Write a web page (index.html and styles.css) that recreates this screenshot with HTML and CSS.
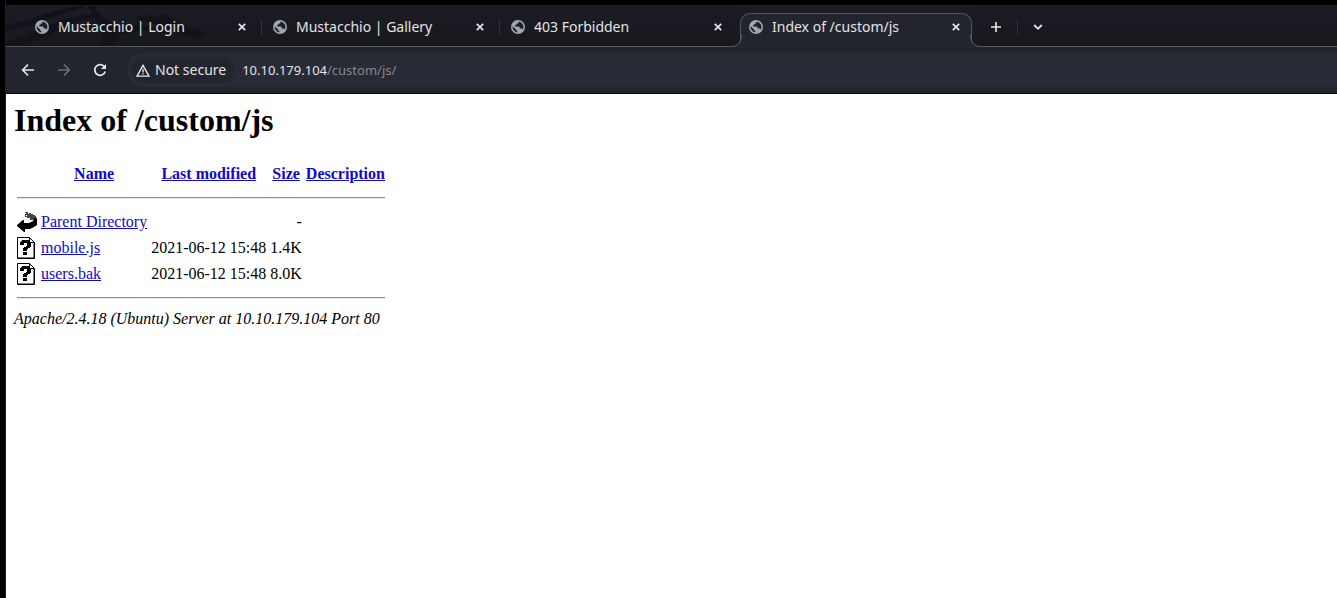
FILE: index.html
```
<!DOCTYPE html>
<html lang="en">
<head>
<meta charset="utf-8">
<title>Index of /custom/js</title>
<link rel="stylesheet" href="styles.css">
</head>
<body>
<svg class="defs" aria-hidden="true">
  <symbol id="globe" viewBox="0 0 14 14">
    <circle cx="7" cy="7" r="7" fill="#a3a6ae"/>
    <path d="M7.6 1.6 C7.8 3 7 3.4 5.9 3.6 C5.7 4.7 5.2 5 4.2 5 V6.4 H7.4 C8.5 6.4 8.8 7.2 8.8 8.4 H10.2 C11 8.4 11.6 8.9 11.7 9.7 A5.5 5.5 0 0 0 7.6 1.6 Z M1.6 6.3 L5 9.4 C5.1 10.2 5.6 10.6 6.3 10.7 V12.4 A5.5 5.5 0 0 1 1.6 6.3 Z" fill="#1e2029"/>
  </symbol>
  <symbol id="close" viewBox="0 0 8 8"><path d="M.8 .8 L7.2 7.2 M7.2 .8 L.8 7.2" stroke="#e6e6e8" stroke-width="1.7" fill="none"/></symbol>
  <symbol id="unknown" viewBox="0 0 20 22">
    <path d="M.5 .5 H12.5 L17.5 5.5 V21.5 H.5 Z" fill="#fff" stroke="#000"/>
    <path d="M12.5 .5 V5.5 H17.5 M17 6 V21 H1" fill="none" stroke="#000"/>
    <path d="M4 4 H5 V3 H12 V4 H13 V5 H14 V10 H13 V11 H11 V12 H10 V14 H6 V11 H7 V10 H9 V9 H10 V6 H7 V8 H3 V5 H4 Z M6 15 H10 V18 H6 Z" fill="#000"/>
  </symbol>
</svg>
<div class="window">
  <header class="strip">
    <svg class="dragon" width="220" height="40" viewBox="0 0 220 40" aria-hidden="true">
      <path d="M0 20 C24 14 48 4 72 0 H82 C56 8 26 20 0 25 Z M0 36 C28 28 56 10 86 8 L90 12 C62 16 36 34 14 40 H0 Z M82 0 H89 C94 14 112 16 116 28 L104 40 H94 C104 24 88 16 82 0 Z M128 8 L138 12 L142 8 L150 12 L156 8 C168 12 176 20 199 26 L194 34 C170 28 160 18 136 16 Z M112 24 C130 15 150 20 166 29 C148 23 130 24 112 30 Z"/>
    </svg>
    <nav class="tabs">
      <div class="tab"><svg class="globe"><use href="#globe"/></svg><span class="label">Mustacchio | Login</span><button class="x" aria-label="Close tab"><svg><use href="#close"/></svg></button></div>
      <div class="tab"><svg class="globe"><use href="#globe"/></svg><span class="label">Mustacchio | Gallery</span><button class="x" aria-label="Close tab"><svg><use href="#close"/></svg></button></div>
      <div class="tab last"><svg class="globe"><use href="#globe"/></svg><span class="label">403 Forbidden</span><button class="x" aria-label="Close tab"><svg><use href="#close"/></svg></button></div>
      <div class="tab active"><svg class="globe"><use href="#globe"/></svg><span class="label">Index of /custom/js</span><button class="x" aria-label="Close tab"><svg><use href="#close"/></svg></button></div>
    </nav>
    <button class="tool" aria-label="New tab"><svg width="12" height="12" viewBox="0 0 12 12"><path d="M6 1 V11 M1 6 H11" stroke="#e6e6e8" stroke-width="1.6"/></svg></button>
    <span class="divider"></span>
    <button class="tool" aria-label="Search tabs"><svg width="10" height="8" viewBox="0 0 10 8"><path d="M1.2 2 L5 5.8 L8.8 2" fill="none" stroke="#e6e6e8" stroke-width="1.8"/></svg></button>
  </header>
  <div class="toolbar">
    <button class="nav" aria-label="Back"><svg width="14" height="14" viewBox="0 0 14 14"><path d="M13 7 H2 M7 1.6 L1.6 7 L7 12.4" fill="none" stroke="#e6e6e8" stroke-width="1.6"/></svg></button>
    <button class="nav" aria-label="Forward"><svg width="14" height="14" viewBox="0 0 14 14"><path d="M1 7 H12 M7 1.6 L12.4 7 L7 12.4" fill="none" stroke="#6d6f77" stroke-width="1.6"/></svg></button>
    <button class="nav" aria-label="Reload"><svg width="14" height="14" viewBox="0 0 14 14"><path d="M12.2 8.4 A5.3 5.3 0 1 1 11 3.4 L12.4 4.8" fill="none" stroke="#e6e6e8" stroke-width="1.7"/><path d="M13 1 V6 H8 Z" fill="#e6e6e8"/></svg></button>
    <div class="address">
      <button class="secure"><svg width="14" height="13" viewBox="0 0 14 13"><path d="M7 1.4 L13 12.1 H1 Z" fill="none" stroke="#e6e6e8" stroke-width="1.4"/><path d="M7 5 V8.4 M7 9.2 V10.6" stroke="#e6e6e8" stroke-width="1.3"/></svg>Not secure</button>
      <div class="url">10.10.179.104<span>/custom/js/</span></div>
    </div>
  </div>
  <main class="page">
    <h1>Index of /custom/js</h1>
    <table>
      <tr><th class="icon"></th><th><a href="#">Name</a></th><th><a href="#">Last modified</a></th><th><a href="#">Size</a></th><th><a href="#">Description</a></th></tr>
      <tr><th colspan="5"><hr></th></tr>
      <tr><td class="icon"><svg width="20" height="22" viewBox="0 0 20 22" role="img" aria-label="Parent directory"><path d="M8 1 H11 V2 H14 V3 H16 V4 H18 V5 H19 V9 H13 V7 H10 V6 H8 Z" fill="#444"/><path d="M8 2 H9 V3 H8 Z M11 2 H12 V3 H11 Z M9 4 H10 V5 H9 Z" fill="#fff"/><path d="M19 6 L20 8 V14 L17 16 L13 18 H8 V21 H7 L0 15 V14 L6 9 H7 V12 H12 L16 10 Z" fill="#000"/></svg></td><td><a href="#">Parent Directory</a></td><td>&nbsp;</td><td class="right">-</td><td></td></tr>
      <tr><td class="icon"><svg width="20" height="22" role="img" aria-label="Unknown file"><use href="#unknown"/></svg></td><td><a href="#">mobile.js</a></td><td class="right">2021-06-12 15:48</td><td class="right">1.4K</td><td></td></tr>
      <tr><td class="icon"><svg width="20" height="22" role="img" aria-label="Unknown file"><use href="#unknown"/></svg></td><td><a href="#">users.bak</a></td><td class="right">2021-06-12 15:48</td><td class="right">8.0K</td><td></td></tr>
      <tr><th colspan="5"><hr></th></tr>
    </table>
    <address>Apache/2.4.18 (Ubuntu) Server at 10.10.179.104 Port 80</address>
  </main>
</div>
</body>
</html>
```
FILE: styles.css
```
* { box-sizing: border-box; }
html, body { margin: 0; }
body { background: #000; font-family: "Liberation Serif", "Times New Roman", serif; font-size: 16px; }
.defs { display: none; }
button { border: 0; padding: 0; background: none; font: inherit; color: inherit; }
.window {
  margin-left: 5px;
  padding-top: 5px;
  min-height: 100vh;
  display: flex;
  flex-direction: column;
  border-left: 1px solid #202125;
}
.strip, .toolbar { font: 14px/20px "Noto Sans", sans-serif; color: #e3e3e6; }
.strip {
  position: relative;
  display: flex;
  height: 42px;
  padding: 7px 0 0 20px;
  border-top: 1px solid #202125;
  border-bottom: 1px solid #54565c;
  background: linear-gradient(#1c1c25, #17181c);
}
.dragon { position: absolute; left: 0; top: 0; fill: #121318; }
.tabs { position: relative; display: flex; gap: 6px; margin-bottom: -1px; }
.tab {
  position: relative;
  display: flex;
  align-items: center;
  width: 232px;
  padding: 0 12px 6px 9px;
}
.tab:not(.active)::after {
  content: "";
  position: absolute;
  right: -4px;
  top: 6px;
  width: 1px;
  height: 16px;
  background: #30313a;
}
.tab.last::after { right: 234px; }
.globe { width: 14px; height: 14px; margin-right: 9px; }
.label { flex: 1; white-space: nowrap; }
.x { display: flex; }
.x svg { width: 8px; height: 8px; }
.active {
  padding: 0 11px 7px 8px;
  background: #23252e;
  border: 1px solid #54565c;
  border-bottom: 0;
  border-radius: 10px 10px 0 0;
}
.active::before, .active::after {
  content: "";
  position: absolute;
  bottom: 0;
  width: 11px;
  height: 11px;
  border-bottom: 1px solid #54565c;
}
.active::before { left: -11px; border-right: 1px solid #54565c; border-radius: 0 0 10px 0; box-shadow: 3px 3px 0 #23252e; }
.active::after { right: -11px; border-left: 1px solid #54565c; border-radius: 0 0 0 10px; box-shadow: -3px 3px 0 #23252e; }
.active::before { clip-path: inset(0 -1px 0 0); }
.active::after { clip-path: inset(0 0 0 -1px); }
.tool { display: flex; align-items: center; justify-content: center; width: 24px; height: 27px; margin-left: 12px; }
.divider { width: 1px; height: 16px; margin: 6px -4px 0 9px; background: #30313a; }
.toolbar {
  position: relative;
  display: flex;
  align-items: center;
  gap: 12px;
  padding: 6px 0 6px 10px;
  border-bottom: 1px solid #08090c;
  background: #23252e;
}
.nav { display: flex; align-items: center; justify-content: center; width: 24px; height: 24px; }
.address {
  flex: 1;
  display: flex;
  align-items: center;
  height: 34px;
  margin-left: 3px;
  padding-left: 4px;
  border-radius: 17px 0 0 17px;
  background: #282a35;
}
.secure {
  display: flex;
  align-items: center;
  gap: 5px;
  height: 26px;
  padding: 0 8px 0 5px;
  border-radius: 13px;
  background: #23252e;
}
.url { margin-left: 8px; font-size: 13px; }
.url span { color: #858790; }
.page { flex: 1; padding: 8px; background: #fff; color: #000; }
h1 { margin: 0 0 21px; font-size: 32px; line-height: 37px; }
table { border-spacing: 2px; }
th, td { padding: 1px; white-space: nowrap; }
th.icon { height: 24px; }
.icon { vertical-align: top; }
.icon svg { display: block; }
.right { text-align: right; }
hr { margin: 8px 0; height: 2px; border: 0; border-top: 1px solid #8f8f8f; border-bottom: 1px solid #e6e6e6; }
.page a { color: #1108cf; }
```
